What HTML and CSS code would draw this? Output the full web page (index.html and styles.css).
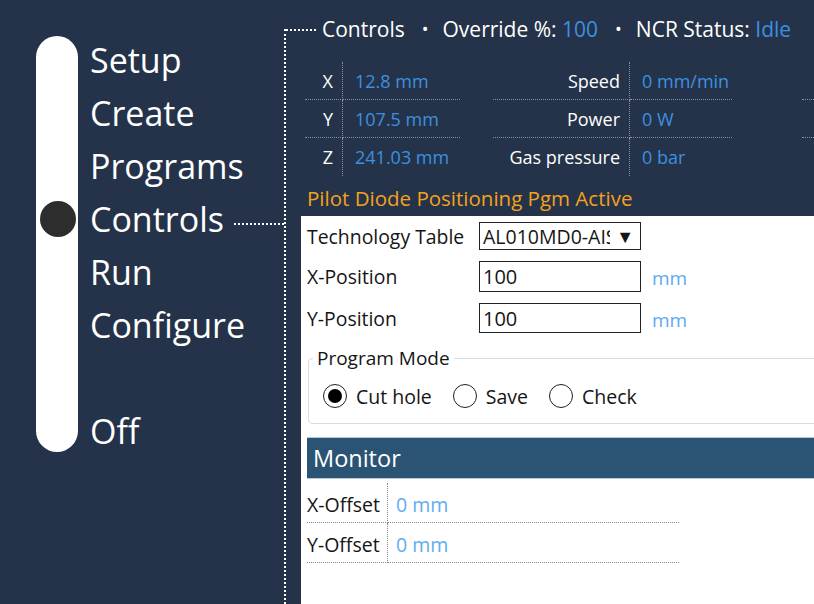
FILE: index.html
```html
<!DOCTYPE html>
<html lang="en">
<head>
<meta charset="utf-8">
<title>Controls</title>
<link rel="stylesheet" href="styles.css">
</head>
<body>
<div class="app">
  <nav class="nav">
    <div class="switch">
      <div class="track"></div>
      <div class="knob"></div>
      <div class="nav-label r1">Setup</div>
      <div class="nav-label r2">Create</div>
      <div class="nav-label r3">Programs</div>
      <div class="nav-label r4 active">Controls</div>
      <div class="nav-label r5">Run</div>
      <div class="nav-label r6">Configure</div>
      <div class="nav-label r8">Off</div>
    </div>
  </nav>
  <main class="main">
    <header class="header">
      <span class="h-text">Controls</span>
      <span class="bullet">•</span>
      <span class="h-text">Override %: <span class="h-val">100</span></span>
      <span class="bullet">•</span>
      <span class="h-text">NCR Status: <span class="h-val">Idle</span></span>
    </header>

    <section class="readouts">
      <div class="group g1">
        <div class="lbl">X</div><div class="val">12.8 mm</div>
        <div class="lbl">Y</div><div class="val">107.5 mm</div>
        <div class="lbl last">Z</div><div class="val last">241.03 mm</div>
      </div>
      <div class="group g2">
        <div class="lbl">Speed</div><div class="val">0 mm/min</div>
        <div class="lbl">Power</div><div class="val">0 W</div>
        <div class="lbl last">Gas pressure</div><div class="val last">0 bar</div>
      </div>
      <div class="group g3">
        <div class="cell"></div>
        <div class="cell"></div>
        <div class="cell last"></div>
      </div>
    </section>

    <div class="status">Pilot Diode Positioning Pgm Active</div>

    <section class="panel">
      <div class="form">
        <div class="f-label">Technology Table</div>
        <div class="select"><span class="select-text">AL010MD0-AIS</span><span class="arrow">▼</span></div>
        <div></div>

        <div class="f-label">X-Position</div>
        <div class="input h31">100</div>
        <div class="unit">mm</div>

        <div class="f-label">Y-Position</div>
        <div class="input">100</div>
        <div class="unit">mm</div>
      </div>

      <fieldset class="mode">
        <legend>Program Mode</legend>
        <div class="radios">
          <label class="radio"><span class="dot checked"></span>Cut hole</label>
          <label class="radio"><span class="dot"></span>Save</label>
          <label class="radio"><span class="dot"></span>Check</label>
        </div>
      </fieldset>

      <div class="monitor-head">Monitor</div>
      <div class="monitor">
        <div class="m-lbl">X-Offset</div><div class="m-val">0 mm</div>
        <div class="m-lbl">Y-Offset</div><div class="m-val">0 mm</div>
      </div>
    </section>
  </main>
</div>
</body>
</html>
```
FILE: styles.css
```css
* { box-sizing: border-box; }
html, body {
  margin: 0;
  padding: 0;
  width: 814px;
  height: 604px;
  overflow: hidden;
  background: #243349;
  font-family: "Open Sans", "Noto Sans", sans-serif;
  color: #fff;
}
.app {
  display: flex;
  height: 604px;
  overflow: hidden;
}

/* ---------- navigation ---------- */
.nav {
  width: 284px;
  flex: none;
  padding-top: 36px;
  padding-left: 36px;
}
.switch {
  display: grid;
  grid-template-columns: 42px 1fr;
  grid-template-rows: repeat(8, 53px);
  column-gap: 12px;
}
.track {
  grid-column: 1;
  grid-row: 1 / -1;
  height: 416px;
  background: #fff;
  border-radius: 21px;
}
.knob {
  grid-column: 1;
  grid-row: 4;
  align-self: center;
  justify-self: center;
  width: 36px;
  height: 36px;
  margin-top: -6px;
  margin-left: 1px;
  border-radius: 50%;
  background: #2d2d2d;
}
.nav-label {
  grid-column: 2;
  font-size: 34px;
  line-height: 49px;
  padding-bottom: 4px;
  display: flex;
  align-items: center;
}
.r1 { grid-row: 1; }
.r2 { grid-row: 2; }
.r3 { grid-row: 3; }
.r4 { grid-row: 4; }
.r5 { grid-row: 5; }
.r6 { grid-row: 6; }
.r8 { grid-row: 8; }
.nav-label.active::after {
  content: "";
  flex: 1;
  margin-left: 10px;
  margin-top: 8px;
  border-top: 2px dotted #fff;
}

/* ---------- main ---------- */
.main {
  flex: 1;
  min-width: 0;
  margin-top: 29px;
  border-left: 2px dotted #fff;
  display: flex;
  flex-direction: column;
}
.header {
  margin-top: -15px;
  height: 30px;
  display: flex;
  align-items: center;
  font-size: 21px;
  white-space: nowrap;
}
.header::before {
  content: "";
  width: 30px;
  margin-right: 6px;
  margin-top: 2px;
  border-top: 2px dotted #fff;
}
.bullet {
  margin: 0 14px 0 17px;
  font-size: 18px;
}
.h-val { color: #3d90e0; }

/* readouts */
.readouts {
  margin-top: 18px;
  margin-left: 19px;
  display: flex;
  white-space: nowrap;
  font-size: 18px;
}
.group {
  display: grid;
  grid-auto-rows: 38px;
  flex: none;
}
.g1 { grid-template-columns: 38px 117px; margin-right: 33px; }
.g2 { grid-template-columns: 137px 102px; margin-right: 70px; }
.g3 { grid-template-columns: 12px; }
.lbl, .val, .cell {
  display: flex;
  align-items: center;
  border-bottom: 1px dotted #8793a3;
}
.lbl {
  justify-content: flex-end;
  padding-right: 9px;
  border-right: 1px dotted #8793a3;
}
.val {
  padding-left: 12px;
  color: #3d90e0;
}
.lbl.last, .val.last, .cell.last { border-bottom: none; }

.status {
  margin: 8px 0 4px 21px;
  line-height: 28px;
  font-size: 20.5px;
  color: #f5a11c;
  white-space: nowrap;
}

/* ---------- panel ---------- */
.panel {
  flex: 1;
  margin-left: 15px;
  background: #fff;
  color: #151515;
  padding: 6px 0 0 6px;
  font-size: 19.4px;
  overflow: hidden;
}
.form {
  display: grid;
  grid-template-columns: 161px 162px auto;
  column-gap: 11px;
  row-gap: 11px;
  align-items: center;
}
.f-label { white-space: nowrap; }
.select {
  height: 28px;
  border: 1.5px solid #222;
  display: flex;
  align-items: center;
  padding: 0 6px 0 3px;
  font-size: 19.5px;
}
.select-text {
  flex: 1;
  overflow: hidden;
  white-space: nowrap;
  width: 120px;
}
.arrow { font-size: 18px; margin-left: 6px; }
.input {
  height: 30px;
  border: 1.5px solid #222;
  padding-left: 3px;
  display: flex;
  align-items: center;
  font-size: 20px;
}
.input.h31 { height: 31px; }
.unit {
  color: #5eabef;
  font-size: 19px;
  margin-top: 3px;
}

fieldset.mode {
  margin: 12px -8px 0 1px;
  padding: 0 12px;
  border: 1px solid #d5dde6;
  border-radius: 4px;
}
fieldset.mode legend {
  padding: 0 4px;
  margin-left: -8px;
  font-size: 19px;
  line-height: 26px;
}
.radios {
  display: flex;
  align-items: center;
  height: 26px;
  margin: 12px 0 14px 2px;
  white-space: nowrap;
  font-size: 19.5px;
}
.radio {
  display: flex;
  align-items: center;
  margin-right: 21px;
}
.dot {
  width: 24px;
  height: 24px;
  border-radius: 50%;
  border: 1.5px solid #222;
  margin-right: 9px;
  display: flex;
  align-items: center;
  justify-content: center;
}
.dot.checked::after {
  content: "";
  width: 14px;
  height: 14px;
  border-radius: 50%;
  background: #000;
}

.monitor-head {
  margin-top: 13px;
  height: 42px;
  background: #2a5374;
  border-top: 1px solid #b9c7d5;
  border-bottom: 1px solid #b9c7d5;
  color: #fff;
  font-size: 23.5px;
  display: flex;
  align-items: center;
  padding-left: 6px;
}
.monitor {
  margin-top: 4px;
  display: grid;
  grid-template-columns: 81px 291px;
  grid-auto-rows: 40px;
  font-size: 19.5px;
}
.m-lbl, .m-val {
  display: flex;
  align-items: center;
  border-bottom: 1px dotted #888;
  white-space: nowrap;
  padding-top: 3px;
}
.m-lbl {
  border-right: 1px dotted #888;
}
.m-val {
  padding-left: 8px;
  color: #62adf0;
}
```
